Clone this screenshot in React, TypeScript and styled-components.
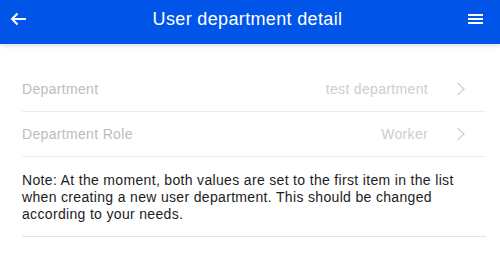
import React from 'react';
import styled, { createGlobalStyle } from 'styled-components';

const GlobalStyle = createGlobalStyle`
  html, body {
    margin: 0;
    padding: 0;
    background: #ffffff;
    font-family: "Liberation Sans", Arial, sans-serif;
  }
`;

const Page = styled.div`
  width: 500px;
  height: 256px;
  overflow: hidden;
  background: #ffffff;
`;

const Navbar = styled.div`
  height: 44px;
  box-sizing: border-box;
  padding: 0 17px 6px 10px;
  background: #0055e8;
  display: flex;
  align-items: center;
  justify-content: space-between;
  box-shadow: 0 1px 5px rgba(0, 0, 0, 0.18);
  position: relative;
  z-index: 1;
`;

const NavButton = styled.button<{ $align?: string }>`
  border: none;
  background: none;
  padding: 0;
  width: 26px;
  height: 20px;
  display: flex;
  align-items: center;
  justify-content: ${(p) => p.$align || 'flex-start'};
  cursor: pointer;
`;

const Title = styled.div`
  color: #ffffff;
  font-size: 18px;
  line-height: 20px;
  letter-spacing: 0.35px;
  margin-left: 2px;
`;

const Content = styled.div`
  padding: 23px 14px 0 22px;
  letter-spacing: 0.33px;
`;

const List = styled.ul`
  list-style: none;
  margin: 0;
  padding: 0;
`;

const Row = styled.li`
  height: 44px;
  display: flex;
  align-items: center;
  border-bottom: 1px solid #ececec;
  font-size: 14px;
`;

const Label = styled.span`
  flex: 1;
  color: #bcbcbc;
`;

const Value = styled.span`
  color: #cdcdcd;
  margin-right: 28px;
`;

const Chevron = styled.svg`
  width: 10px;
  height: 14px;
  margin-right: 20px;
`;

const Note = styled.p`
  margin: 0;
  padding: 15px 0 13px 0;
  font-size: 14px;
  line-height: 17px;
  color: #1c1c1c;
  border-bottom: 1px solid #e2e2e2;
`;

const ArrowIcon = () => (
  <svg width="17" height="14" viewBox="0 0 17 14">
    <path d="M16 7H2M7.5 1.5L2 7l5.5 5.5" stroke="#fff" strokeWidth="2" fill="none" />
  </svg>
);

const MenuIcon = () => (
  <svg width="15" height="10" viewBox="0 0 15 10">
    <path d="M0 1h15M0 5h15M0 9h15" stroke="#fff" strokeWidth="1.8" fill="none" />
  </svg>
);

const ListItem: React.FC<{ label: string; value: string }> = ({ label, value }) => (
  <Row>
    <Label>{label}</Label>
    <Value>{value}</Value>
    <Chevron viewBox="0 0 10 14">
      <path d="M1.5 1l6.5 6-6.5 6" stroke="#d2d2d2" strokeWidth="1.4" fill="none" />
    </Chevron>
  </Row>
);

const App: React.FC = () => {
  return (
    <Page>
      <GlobalStyle />
      <Navbar>
        <NavButton>
          <ArrowIcon />
        </NavButton>
        <Title>User department detail</Title>
        <NavButton $align="flex-end">
          <MenuIcon />
        </NavButton>
      </Navbar>
      <Content>
        <List>
          <ListItem label="Department" value="test department" />
          <ListItem label="Department Role" value="Worker" />
        </List>
        <Note>
          Note: At the moment, both values are set to the first item in the list when creating a new
          user department. This should be changed according to your needs.
        </Note>
      </Content>
    </Page>
  );
};

export default App;
